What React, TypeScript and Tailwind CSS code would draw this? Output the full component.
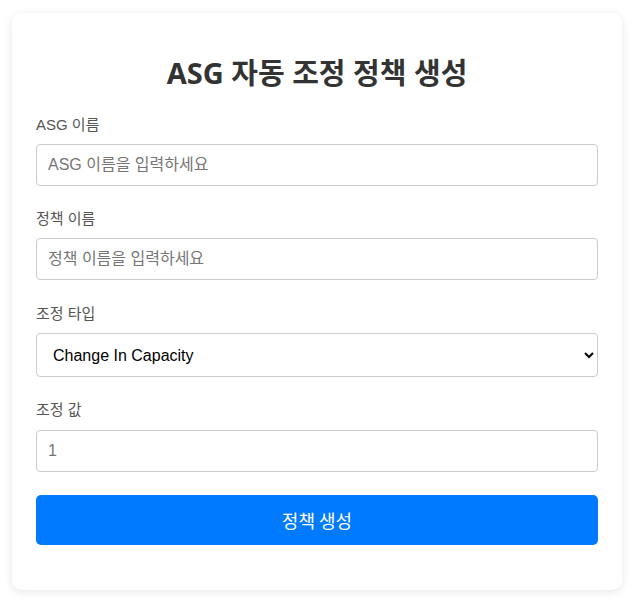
import React from "react";

export default function App() {
  return (
    <div className="min-h-[598px] bg-white px-[12px] pt-[13px] [font-family:'Liberation_Sans','Noto_Sans_CJK_KR',sans-serif]">
      <div className="w-[610px] rounded-[10px] bg-white px-[24px] pt-[42px] pb-[45px] shadow-[0_2px_10px_rgba(0,0,0,0.1)]">
        <h2 className="mb-[24px] text-center text-[29px] font-bold leading-[36px] text-[#333] [font-family:'Noto_Sans','Noto_Sans_CJK_KR',sans-serif]">
          ASG 자동 조정 정책 생성
        </h2>

        <div className="mb-[23px]">
          <label className="mb-[9px] block text-[15px] leading-[20px] text-[#555]">ASG 이름</label>
          <input
            type="text"
            placeholder="ASG 이름을 입력하세요"
            className="block h-[42px] w-full rounded-[4px] border border-[#ccc] px-[11px] text-[16px] text-[#333] outline-none placeholder:text-[#757575]"
          />
        </div>

        <div className="mb-[24px]">
          <label className="mb-[9px] block text-[15px] leading-[20px] text-[#555]">정책 이름</label>
          <input
            type="text"
            placeholder="정책 이름을 입력하세요"
            className="block h-[42px] w-full rounded-[4px] border border-[#ccc] px-[11px] text-[16px] text-[#333] outline-none placeholder:text-[#757575]"
          />
        </div>

        <div className="mb-[23px]">
          <label className="mb-[9px] block text-[15px] leading-[20px] text-[#555]">조정 타입</label>
          <select
            defaultValue="ChangeInCapacity"
            className="block h-[44px] w-full rounded-[4px] border border-[#ccc] bg-white px-[12px] text-[16px] text-black outline-none"
          >
            <option value="ChangeInCapacity">Change In Capacity</option>
            <option value="ExactCapacity">Exact Capacity</option>
            <option value="PercentChangeInCapacity">Percent Change In Capacity</option>
          </select>
        </div>

        <div className="mb-[23px]">
          <label className="mb-[10px] block text-[15px] leading-[20px] text-[#555]">조정 값</label>
          <input
            type="number"
            placeholder="1"
            className="block h-[42px] w-full rounded-[4px] border border-[#ccc] px-[11px] text-[16px] text-[#333] outline-none placeholder:text-[#757575]"
          />
        </div>

        <button className="block h-[50px] w-full rounded-[5px] bg-[#007bff] text-[18px] text-white [font-family:'Noto_Sans_CJK_KR',sans-serif]">
          정책 생성
        </button>
      </div>
    </div>
  );
}
